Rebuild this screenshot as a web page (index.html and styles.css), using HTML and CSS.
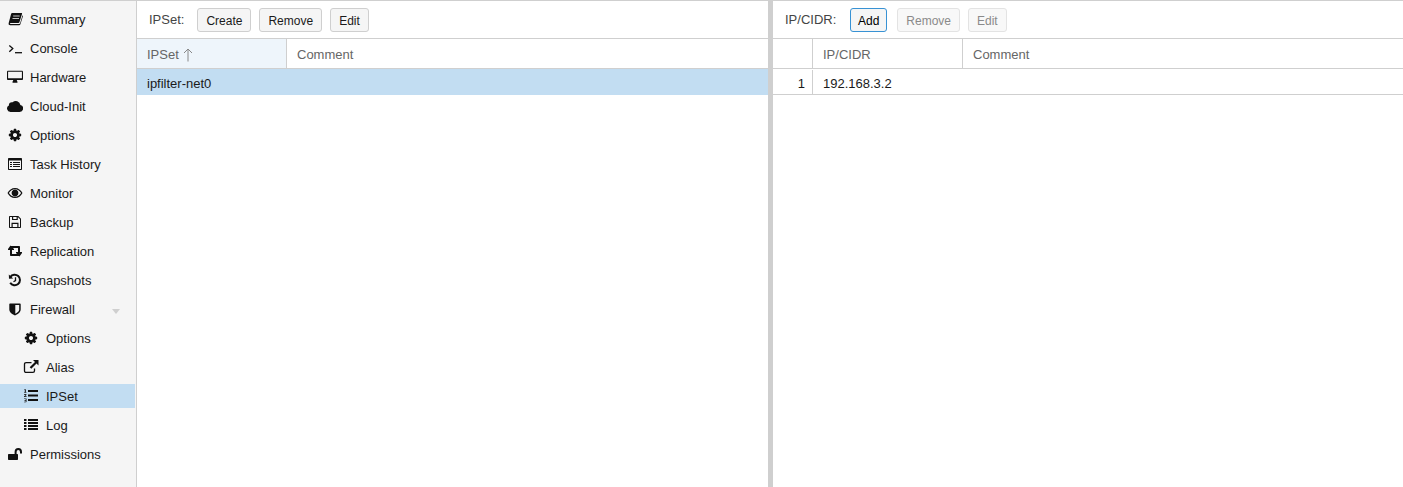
FILE: index.html
```html
<!DOCTYPE html>
<html lang="en">
<head>
<meta charset="utf-8">
<title>IPSet</title>
<link rel="stylesheet" href="styles.css">
</head>
<body>
<div class="app">
  <nav class="side">
    <div class="item"><svg class="ico" viewBox="0 0 16 16"><path d="M5.200 2h9.300c.5 0 .7.400.5 1l-2.600 8.300c-.2.500-.5.700-1 .7H3.600c-.9 0-.9 1-.1 1h8.600c.5 0 .8-.2 1-.7l2.400-8 .5.600-2.600 8.400c-.2.600-.7 1-1.300 1H3.200C2 14.300 1.300 13.300 1.700 12L4 3.200C4.200 2.500 4.600 2 5.200 2z"/><path class="cut" d="M6.200 5h6.500M5.500 7.500h6.500"/></svg><span>Summary</span></div>
    <div class="item"><svg class="ico" viewBox="0 0 16 16"><path class="line" d="M2.300 5.500l3.500 3-3.500 3.300"/><path class="line" d="M8 12.700h7"/></svg><span>Console</span></div>
    <div class="item"><svg class="ico" viewBox="0 0 16 16"><path fill-rule="evenodd" d="M1.200 1.700h13.600c.7 0 1.200.5 1.200 1.200v7c0 .7-.5 1.200-1.200 1.200H9.800c0 1 .8 1.500.8 2.100 0 .3-.2.500-.5.500H5.900c-.3 0-.5-.2-.5-.5 0-.6.800-1.100.8-2.100h-5C.5 11.100 0 10.600 0 9.900v-7c0-.7.500-1.200 1.200-1.200zM1.100 2.800v6.500h13.800V2.800z"/></svg><span>Hardware</span></div>
    <div class="item"><svg class="ico" viewBox="0 0 16 16"><path d="M3.500 14A3.500 3.500 0 0 1 1.900 7.400 2.900 2.900 0 0 1 5.600 4.300 4.600 4.600 0 0 1 13.400 6.900 3.600 3.600 0 0 1 12.500 14z"/></svg><span>Cloud-Init</span></div>
    <div class="item"><svg class="ico" viewBox="-100 -100 1992 1992"><path d="M1152 896q0-106-75-181t-181-75-181 75-75 181 75 181 181 75 181-75 75-181zm512-109v222q0 12-8 23t-20 13l-185 28q-19 54-39 91 35 50 107 138 10 12 10 25t-9 23q-27 37-99 108t-94 71q-12 0-26-9l-138-108q-44 23-91 38-16 136-29 186-7 28-36 28h-222q-14 0-24.500-8.500t-11.500-21.500l-28-184q-49-16-90-37l-141 107q-10 9-25 9-14 0-25-11-126-114-165-168-7-10-7-23 0-12 8-23 15-21 51-66.500t54-70.500q-27-50-41-99l-183-27q-13-2-21-12.500t-8-23.500v-222q0-12 8-23t19-13l186-28q14-46 39-92-40-57-107-138-10-12-10-24 0-10 9-23 26-36 98.500-107.500t94.500-71.500q13 0 26 10l138 107q44-23 91-38 16-136 29-186 7-28 36-28h222q14 0 24.500 8.500t11.500 21.500l28 184q49 16 90 37l142-107q9-9 24-9 13 0 25 10 129 119 165 170 7 8 7 22 0 12-8 23-15 21-51 66.500t-54 70.500q26 50 41 98l183 28q13 2 21 12.500t8 23.500z"/></svg><span>Options</span></div>
    <div class="item"><svg class="ico" viewBox="0 0 16 16"><path fill-rule="evenodd" d="M2 2h12c.6 0 1 .4 1 1v10c0 .6-.4 1-1 1H2c-.6 0-1-.4-1-1V3c0-.6.4-1 1-1zm0 2.500V13h12V4.500z"/><path d="M3 6h2v1H3zM6 6h7v1H6zM3 8h2v1H3zM6 8h7v1H6zM3 10h2v1H3zM6 10h7v1H6z"/></svg><span>Task History</span></div>
    <div class="item"><svg class="ico" viewBox="0 0 16 16"><path fill-rule="evenodd" d="M8 3c3.300 0 6 2 7.500 5-1.500 3-4.200 5-7.500 5S2 11 .5 8C2 5 4.700 3 8 3zM8 4.200C5.500 4.200 3.300 5.700 1.900 8c1.400 2.300 3.600 3.800 6.100 3.800S12.700 10.300 14.100 8C12.700 5.700 10.500 4.200 8 4.200z"/><path d="M8 4.600a3.400 3.400 0 1 1-.01 0z"/></svg><span>Monitor</span></div>
    <div class="item"><svg class="ico" viewBox="0 0 16 16"><path fill-rule="evenodd" d="M3 2h8.300L14 4.700V13c0 .6-.4 1-1 1H3c-.6 0-1-.4-1-1V3c0-.6.4-1 1-1zm0 1.100v9.800h1.500V8.700h7v4.200H13V5.200L10.800 3.100v3H5V3.100zM6.200 3.100V5h3.400V3.100zM5.700 9.900v3h4.600v-3z"/></svg><span>Backup</span></div>
    <div class="item"><svg class="ico" viewBox="0 0 16 16"><path d="M3.500 2.500L7 6v1H5v4h5.200l1.800 2H3.800c-.5 0-.8-.3-.8-.8V7H1V6zM12.500 13.500L9 10V9h2V5H5.800L4 3h8.200c.5 0 .8.300.8.800V9h2v1z"/></svg><span>Replication</span></div>
    <div class="item"><svg class="ico" viewBox="0 0 16 16"><path class="thick" d="M3.300 5A5.300 5.300 0 1 1 3.200 10.800"/><path d="M1.800 2.500L2 6.800l4.200-.2z"/><path class="line" d="M8.500 5.300v3.300l-2 1.200"/></svg><span>Snapshots</span></div>
    <div class="item"><svg class="ico" viewBox="0 0 16 16"><path d="M3 2.500h10c.4 0 .7.300.7.700v5.300c0 3-3.400 5-5.700 6-2.300-1-5.700-3-5.700-6V3.200c0-.4.300-.7.700-.7z"/><path class="hollow" d="M8.300 4h3.900v4.500c0 2-2.300 3.500-3.900 4.300z"/></svg><span>Firewall</span><i class="caret"></i></div>
    <div class="item sub"><svg class="ico" viewBox="-100 -100 1992 1992"><path d="M1152 896q0-106-75-181t-181-75-181 75-75 181 75 181 181 75 181-75 75-181zm512-109v222q0 12-8 23t-20 13l-185 28q-19 54-39 91 35 50 107 138 10 12 10 25t-9 23q-27 37-99 108t-94 71q-12 0-26-9l-138-108q-44 23-91 38-16 136-29 186-7 28-36 28h-222q-14 0-24.500-8.500t-11.500-21.500l-28-184q-49-16-90-37l-141 107q-10 9-25 9-14 0-25-11-126-114-165-168-7-10-7-23 0-12 8-23 15-21 51-66.500t54-70.500q-27-50-41-99l-183-27q-13-2-21-12.500t-8-23.500v-222q0-12 8-23t19-13l186-28q14-46 39-92-40-57-107-138-10-12-10-24 0-10 9-23 26-36 98.500-107.500t94.500-71.500q13 0 26 10l138 107q44-23 91-38 16-136 29-186 7-28 36-28h222q14 0 24.500 8.500t11.500 21.500l28 184q49 16 90 37l142-107q9-9 24-9 13 0 25 10 129 119 165 170 7 8 7 22 0 12-8 23-15 21-51 66.500t-54 70.500q26 50 41 98l183 28q13 2 21 12.500t8 23.500z"/></svg><span>Options</span></div>
    <div class="item sub"><svg class="ico" viewBox="0 0 16 16"><path class="line" d="M11.500 9.500v2.300c0 1-.6 1.600-1.600 1.600H3.100c-1 0-1.600-.6-1.600-1.600V5.200c0-1 .6-1.600 1.600-1.600h5.400"/><path d="M10 1h5.500v5.500l-2-2-5.200 5.300-1.600-1.600L12 2.900z"/></svg><span>Alias</span></div>
    <div class="item sub sel"><svg class="ico" viewBox="0 0 16 16"><path d="M5 2h10v2H5zM5 6.500h10v2H5zM5 11h10v2H5z"/><path d="M1.500 1.200h1.300v3h.7v.6H1v-.6h.8V2H1.200zM1 6h2.300c.5 1-.4 1.700-1.200 2.300h1.500v.7H1v-.6c1-.9 1.600-1.300 1.500-1.700H1zM1 10.500h2.500v3.300c0 .3-.2.500-.5.500H1v-.6h1.700v-.8H1.500v-.6h1.200v-1.200H1z"/></svg><span>IPSet</span></div>
    <div class="item sub"><svg class="ico" viewBox="0 0 16 16"><path d="M1 2h2.500v2H1zM5 2h10v2H5zM1 5h2.500v2H1zM5 5h10v2H5zM1 8h2.500v2H1zM5 8h10v2H5zM1 11h2.500v2H1zM5 11h10v2H5z"/></svg><span>Log</span></div>
    <div class="item"><svg class="ico" viewBox="0 0 16 16"><path d="M2 8h8c.6 0 1 .4 1 1v4c0 .6-.4 1-1 1H2c-.6 0-1-.4-1-1V9c0-.6.4-1 1-1z"/><path class="thick" d="M8.600 8.500V6c0-1.700 1-2.900 2.700-2.900s2.700 1.200 2.700 2.900v1.500"/></svg><span>Permissions</span></div>
  </nav>
  <section class="panel list">
    <div class="bar"><span class="label">IPSet:</span><button class="btn">Create</button><button class="btn">Remove</button><button class="btn">Edit</button></div>
    <div class="head cols-set"><div class="hcell sorted">IPSet<svg class="sort" viewBox="0 0 10 14"><path d="M5 13.500V1M1 5l4-4 4 4"/></svg></div><div class="hcell plain">Comment</div></div>
    <div class="row cols-set chosen"><div class="cell">ipfilter-net0</div><div class="cell"></div></div>
  </section>
  <div class="split"></div>
  <section class="panel detail">
    <div class="bar"><span class="label">IP/CIDR:</span><button class="btn focus">Add</button><button class="btn off">Remove</button><button class="btn off">Edit</button></div>
    <div class="head cols-ip"><div class="hcell"></div><div class="hcell">IP/CIDR</div><div class="hcell plain">Comment</div></div>
    <div class="row cols-ip lined"><div class="cell num">1</div><div class="cell">192.168.3.2</div><div class="cell"></div></div>
  </section>
</div>
</body>
</html>
```
FILE: styles.css
```css
* { box-sizing: border-box; }
html, body { margin: 0; height: 100%; background: #fff; }
body { font: 13px/16px "Liberation Sans", Arial, sans-serif; color: #000; overflow: hidden; }
.app { display: flex; height: 100vh; border-top: 1px solid #cfcfcf; }
.side { flex: 0 0 137px; background: #f5f5f5; border-right: 1px solid #cfcfcf; padding-top: 6px; display: flex; flex-direction: column; gap: 5px; }
.item { height: 24px; display: flex; align-items: center; padding-left: 7px; gap: 7px; color: #1a1a1a; }
.item span { padding-top: 2px; }
.item.sub { padding-left: 23px; }
.item.sel { background: #c2ddf2; margin-right: 1px; }
.ico { width: 16px; height: 16px; flex: none; fill: #111; }
.ico .line { fill: none; stroke: #111; stroke-width: 1.300; }
.ico .thick { fill: none; stroke: #111; stroke-width: 2; }
.ico .cut { fill: none; stroke: #f5f5f5; stroke-width: .8; }
.ico .hollow { fill: #f5f5f5; }
.caret { margin-left: auto; margin-right: 16px; width: 0; height: 0; border: 4px solid transparent; border-top: 5px solid #cfcfcf; border-bottom: 0; position: relative; top: 2px; }
.panel { min-width: 0; display: flex; flex-direction: column; }
.list { flex: 0 0 631px; }
.detail { flex: 1; }
.split { flex: 0 0 5px; background: #cfcfcf; }
.bar { height: 38px; flex: none; display: flex; align-items: center; padding: 1px 0 0 12px; gap: 8px; border-bottom: 1px solid #cfcfcf; }
.label { color: #444; margin-right: 5px; }
.btn { height: 24px; padding: 2px 8px 0; border: 1px solid #cfcfcf; border-radius: 3px; background: #f5f5f5; font: 12px/16px "Liberation Sans", Arial, sans-serif; color: #1a1a1a; }
.btn.focus { width: 37px; padding: 2px 0 0; border-color: #3892d4; margin-left: 1px; margin-right: 2px; color: #000; }
.btn.off { color: #8a8a8a; border-color: #e3e3e3; background: #f8f8f8; }
.head { height: 30px; flex: none; display: grid; border-bottom: 1px solid #cfcfcf; }
.cols-set { grid-template-columns: 150px 1fr; }
.cols-ip { grid-template-columns: 40px 150px 1fr; }
.hcell { display: flex; align-items: center; padding: 2px 0 0 10px; color: #666; border-right: 1px solid #cfcfcf; }
.hcell.plain { border-right: 0; }
.hcell.sorted { background: #eef5fb; }
.sort { width: 10px; height: 14px; margin-left: 4px; fill: none; stroke: #888; stroke-width: 1; }
.row { height: 26px; flex: none; display: grid; }
.chosen { background: #c2ddf2; }
.lined { border-bottom: 1px solid #cfcfcf; }
.cell { display: flex; align-items: center; padding: 3px 0 0 10px; color: #1a1a1a; }
.lined .cell { padding-top: 4px; }
.lined .num { padding: 3px 7px 0 0; border-right: 1px solid #cfcfcf; margin-top: 1px; justify-content: flex-end; }
```
